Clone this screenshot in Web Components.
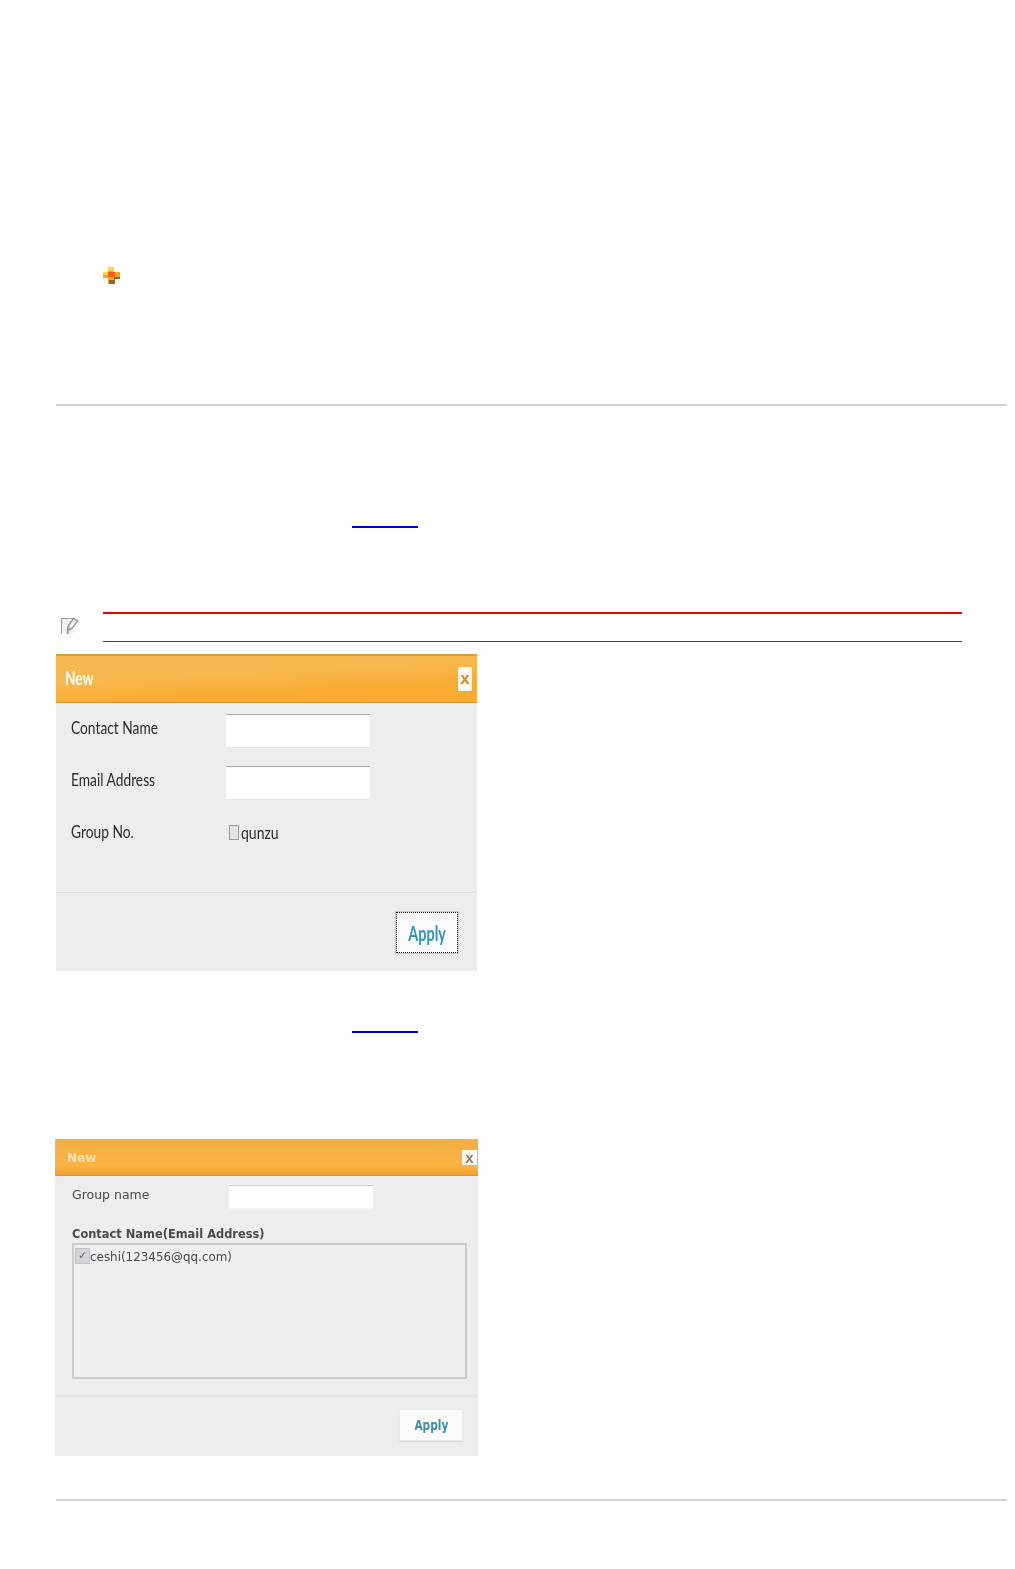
<!DOCTYPE html>
<html>
<head>
<meta charset="utf-8">
<title>New</title>
<style>
  html, body { margin: 0; background: #fff; }
</style>
</head>
<body>
<guide-page>
  <plus-mark></plus-mark>
  <rule-line style="margin-top: 118px"></rule-line>
  <blank-link style="margin-top: 120px"></blank-link>
  <note-bar style="margin-top: 84px"></note-bar>
  <new-dialog style="margin-top: 12px" heading="New">
    <form-row label="Contact Name"><input type="text"></form-row>
    <form-row label="Email Address"><input type="text"></form-row>
    <form-row label="Group No."><tick-box label="qunzu"></tick-box></form-row>
  </new-dialog>
  <blank-link style="margin-top: 60px"></blank-link>
  <new-dialog compact style="margin-top: 106px" heading="New">
    <form-row compact label="Group name"><input type="text"></form-row>
    <contact-list label="Contact Name(Email Address)">
      <tick-box compact checked label="ceshi(123456@qq.com)"></tick-box>
    </contact-list>
  </new-dialog>
  <rule-line style="margin-top: 43px"></rule-line>
</guide-page>

<script>
class GuidePage extends HTMLElement {
  constructor() {
    super();
    this.attachShadow({ mode: "open" });
    this.shadowRoot.innerHTML = `
    <style>
      :host {
        display: block;
        box-sizing: border-box;
        width: 1015px;
        height: 1569px;
        padding: 265px 8px 0 56px;
        overflow: hidden;
      }
    </style>
    <slot></slot>`;
  }
}

class PlusMark extends HTMLElement {
  constructor() {
    super();
    this.attachShadow({ mode: "open" });
    this.shadowRoot.innerHTML = `
    <style>
      :host { display: block; height: 21px; padding-left: 45px; }
      svg { display: block; filter: blur(.7px); }
    </style>
    <svg width="21" height="21" viewBox="0 0 21 21">
      <path d="M7 2h6v5h6v6h-6v6H7v-6H2V7h5z" fill="#f3a81c"/>
      <path d="M7 2h6v4H7zM2 7h5v3H2z" fill="#f9d640"/>
      <path d="M7 7h7v5H7z" fill="#f0601a"/>
      <path d="M13 12h6v2h-5v5h-1zM8 15h5v4H8z" fill="#a0602c"/>
    </svg>`;
  }
}

class RuleLine extends HTMLElement {
  constructor() {
    super();
    this.attachShadow({ mode: "open" });
    this.shadowRoot.innerHTML = `
    <style>
      :host { display: block; height: 2px; background: #d4d4d4; }
    </style>`;
  }
}

// the link text is blank in the reference, only its underline shows
class BlankLink extends HTMLElement {
  constructor() {
    super();
    this.attachShadow({ mode: "open" });
    this.shadowRoot.innerHTML = `
    <style>
      :host { display: block; height: 2px; padding-left: 296px; }
      a { display: block; width: 66px; height: 2px; background: #0000d8; }
    </style>
    <a href="#"></a>`;
  }
}

class NoteBar extends HTMLElement {
  constructor() {
    super();
    this.attachShadow({ mode: "open" });
    this.shadowRoot.innerHTML = `
    <style>
      :host { display: grid; grid-template-columns: 47px 859px; height: 30px; }
      .icon { padding: 5px 0 0 5px; }
      .icon svg { display: block; filter: blur(.4px); }
      .note { border-top: 2px solid #f00000; border-bottom: 1px solid #e80000; }
    </style>
    <div class="icon">
      <svg width="18" height="18" viewBox="0 0 18 18">
        <path d="M1 2h11v15H1z" fill="#f2f2f2"/>
        <path d="M.5 1.5h12M.5 1.5v15" fill="none" stroke="#9a9a9a"/>
        <path d="M12.5 1l4.5 3-6.5 8-4 1.5.5-4.500z" fill="#c4c4c4" stroke="#7e7e7e"/>
        <path d="M12.500 3l2.500 1.800-5 6-1.800-1.200z" fill="#f6f6f6"/>
        <path d="M7 13.500l-.5 3.500" stroke="#8a8a8a" stroke-width="1.600"/>
      </svg>
    </div>
    <div class="note"></div>`;
  }
}

class NewDialog extends HTMLElement {
  constructor() {
    super();
    this.attachShadow({ mode: "open" });
    this.shadowRoot.innerHTML = `
    <style>
      :host {
        display: block;
        width: 421px;
        background: #ededed;
        font-family: "Lato", "Liberation Sans", sans-serif;
        color: #2b2b2b;
      }
      :host([compact]) {
        width: 423px;
        margin-left: -1px;
        font-family: "DejaVu Sans", sans-serif;
        color: #4a4a4a;
      }
      header {
        box-sizing: border-box;
        height: 49px;
        display: flex;
        align-items: center;
        justify-content: space-between;
        padding: 0 5px 2px 9px;
        border-top: 2px solid #e3992c;
        border-bottom: 1px solid #dd962f;
        background: linear-gradient(177deg, #f6b84f 0%, #f7b94f 38%, #f9ab32 72%, #f9aa31 100%);
      }
      :host([compact]) header {
        height: 37px;
        padding: 0 1px 0 12px;
        border-top: 0;
        background: linear-gradient(#f2ad45, #fbb343 75%, #f0a02e);
      }
      h1 {
        margin: 0;
        font: inherit;
        font-size: 18px;
        font-weight: bold;
        color: #fff;
        transform: scaleX(.76);
        transform-origin: left center;
        filter: blur(.3px);
      }
      :host([compact]) h1 { margin-top: 2px; font-size: 12px; font-weight: bold; color: #f8e2bd; filter: blur(.6px); transform: none; }
      .close {
        box-sizing: border-box;
        width: 14px;
        height: 24px;
        display: flex;
        align-items: center;
        justify-content: center;
        background: #fdf8ef;
        color: #d88a1c;
        font: bold 17px "Liberation Sans", sans-serif;
        margin-top: 2px;
      }
      :host([compact]) .close { width: 15px; height: 15px; margin-top: 0; color: #8c7a60; font-size: 15px; filter: blur(.4px); }
      .body {
        box-sizing: border-box;
        height: 189px;
        padding: 11px 0 0 15px;
        display: flex;
        flex-direction: column;
        gap: 18px;
      }
      :host([compact]) .body { height: 219px; padding: 9px 0 0 17px; gap: 0; }
      footer {
        box-sizing: border-box;
        height: 79px;
        border-top: 1px solid #dedede;
        display: flex;
        justify-content: flex-end;
        padding: 18px 18px 0 0;
      }
      :host([compact]) footer { height: 61px; border-top-width: 2px; border-color: #e4e4e4; padding: 12px 15px 0 0; }
      button {
        box-sizing: border-box;
        width: 64px;
        height: 43px;
        padding: 0;
        background: #fbfbfb;
        border: 1px solid #c9c9c9;
        outline: 1px dotted #111;
        outline-offset: -2px;
        color: #2f93b6;
        font: bold 20px "Lato", sans-serif;
      }
      button span { display: inline-block; transform: scaleX(.72); filter: blur(.3px); }
      :host([compact]) button {
        height: 32px;
        outline: 0;
        border-color: #ececec;
        box-shadow: 0 1px 1px #d8d8d8;
        color: #3f8fa8;
        font: bold 14px "DejaVu Sans", sans-serif;
      }
      :host([compact]) button span { transform: scaleX(.76); filter: blur(.5px); }
    </style>
    <header>
      <h1></h1>
      <div class="close">x</div>
    </header>
    <div class="body"><slot></slot></div>
    <footer><button type="button"><span>Apply</span></button></footer>`;
  }

  connectedCallback() {
    this.shadowRoot.querySelector("h1").textContent = this.getAttribute("heading");
  }
}

class FormRow extends HTMLElement {
  constructor() {
    super();
    this.attachShadow({ mode: "open" });
    this.shadowRoot.innerHTML = `
    <style>
      :host {
        display: grid;
        grid-template-columns: 155px 144px;
        align-items: start;
        min-height: 34px;
      }
      :host([compact]) { grid-template-columns: 157px 144px; min-height: 24px; }
      .label {
        font-size: 18px;
        line-height: 27px;
        white-space: nowrap;
        transform: scaleX(.765);
        transform-origin: left center;
        filter: blur(.3px);
      }
      :host([compact]) .label {
        font-size: 12.5px;
        line-height: 20px;
        transform: none;
        filter: blur(.5px);
      }
      ::slotted(input) {
        box-sizing: border-box;
        width: 144px;
        height: 34px;
        margin: 0;
        padding: 0;
        background: #fff;
        border: 0;
        border-top: 1px solid #a9a9a9;
        border-bottom: 1px solid #e6e6e6;
        outline: 0;
      }
      :host([compact]) ::slotted(input) { height: 24px; border-top-color: #cfcfcf; border-bottom-color: #f4f4f4; }
    </style>
    <div class="label"></div>
    <slot></slot>`;
  }

  connectedCallback() {
    this.shadowRoot.querySelector(".label").textContent = this.getAttribute("label");
  }
}

class TickBox extends HTMLElement {
  constructor() {
    super();
    this.attachShadow({ mode: "open" });
    this.shadowRoot.innerHTML = `
    <style>
      :host {
        display: flex;
        align-items: center;
        height: 28px;
        padding-left: 3px;
      }
      :host([compact]) { height: 20px; padding-left: 1px; }
      .box {
        box-sizing: border-box;
        width: 10px;
        height: 15px;
        margin-right: 2px;
        background: #e2e2e2;
        border: 1px solid #9c9c9c;
      }
      :host([compact]) .box {
        width: 15px;
        height: 16px;
        margin-right: 0;
        border-color: #c2c2c2;
        background: #d4d4d8;
        color: #666;
        font: 11px/14px "DejaVu Sans", sans-serif;
        text-align: center;
        filter: blur(.4px);
      }
      .text {
        font-size: 18px;
        white-space: nowrap;
        transform: scaleX(.78);
        transform-origin: left center;
        filter: blur(.3px);
      }
      :host([compact]) .text { font-size: 12.5px; transform: scaleX(.953); filter: blur(.5px); }
    </style>
    <div class="box"></div>
    <div class="text"></div>`;
  }

  connectedCallback() {
    if (this.hasAttribute("checked")) this.shadowRoot.querySelector(".box").textContent = "\u2713";
    this.shadowRoot.querySelector(".text").textContent = this.getAttribute("label");
  }
}

class ContactList extends HTMLElement {
  constructor() {
    super();
    this.attachShadow({ mode: "open" });
    this.shadowRoot.innerHTML = `
    <style>
      :host { display: block; padding-top: 16px; }
      .label {
        font-size: 12.5px;
        font-weight: bold;
        line-height: 18px;
        white-space: nowrap;
        transform: scaleX(.914);
        transform-origin: left center;
        filter: blur(.5px);
      }
      .list {
        box-sizing: border-box;
        width: 395px;
        height: 136px;
        border: 2px solid #cbcbcb;
        background: #efefef;
        padding-top: 1px;
      }
    </style>
    <div class="label"></div>
    <div class="list"><slot></slot></div>`;
  }

  connectedCallback() {
    this.shadowRoot.querySelector(".label").textContent = this.getAttribute("label");
  }
}

customElements.define("guide-page", GuidePage);
customElements.define("plus-mark", PlusMark);
customElements.define("rule-line", RuleLine);
customElements.define("blank-link", BlankLink);
customElements.define("note-bar", NoteBar);
customElements.define("new-dialog", NewDialog);
customElements.define("form-row", FormRow);
customElements.define("tick-box", TickBox);
customElements.define("contact-list", ContactList);
</script>
</body>
</html>
